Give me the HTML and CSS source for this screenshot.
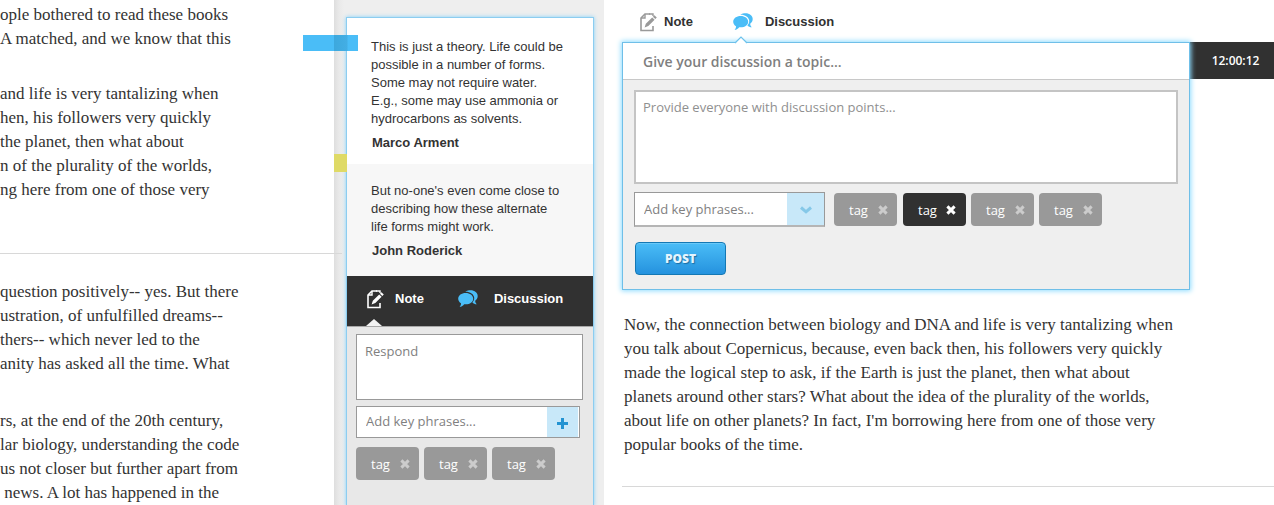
FILE: index.html
```
<!DOCTYPE html>
<html lang="en">
<head>
<meta charset="utf-8">
<title>Reader notes and discussion</title>
<link rel="stylesheet" href="styles.css">
</head>
<body>
<svg class="defs" aria-hidden="true">
  <symbol id="i-note" viewBox="0 0 17 19">
    <path d="M10 1H5L1 5V17.500H13V13" fill="none" stroke="currentColor" stroke-width="1.600"/>
    <path d="M5 1V5H1M9 1H13V3" fill="none" stroke="currentColor" stroke-width="1.400"/>
    <path d="M4.6 14.400L5.800 10.800L12.200 4.400L14.600 6.800L8.300 13.100Z M12.900 3.700L14.400 2.200L16.800 4.600L15.300 6.100Z" fill="currentColor"/>
  </symbol>
  <symbol id="i-chat" viewBox="0 0 20 18">
    <path d="M7.2 1.8C9 .6 10.800 .2 12.500 .2C16.700 .2 19.700 2.700 19.700 6C19.700 8 18.700 9.600 17.200 10.700C17.200 12.200 17.800 13.200 18.800 14.200C17 14.200 15.400 13.500 14.400 12.400C15.700 11.100 16.300 9.500 16.200 7.800C16 4.300 12 1.600 7.200 1.800Z" fill="currentColor"/>
    <path d="M7.700 3C11.900 3 15.200 5.400 15.200 8.700C15.200 12 11.900 14.300 7.700 14.300C7.200 14.300 6.700 14.300 6.200 14.200C5.200 15.800 3.600 16.700 1.600 16.800C2.600 15.800 3.100 14.600 3 13.200C1.300 12.200 .2 10.600 .2 8.700C.2 5.400 3.500 3 7.700 3Z" fill="currentColor"/>
  </symbol>
  <symbol id="i-x" viewBox="0 0 10 10">
    <path d="M1.400 1.400L8.600 8.600M8.600 1.400L1.400 8.600" stroke="currentColor" stroke-width="3" fill="none"/>
  </symbol>
</svg>
<div class="page">
  <main class="article article-left">
    <p>ople bothered to read these books<br>A matched, and we know that this</p>
    <p>and life is very tantalizing when<br>hen, his followers very quickly<br>the planet, then what about<br>n of the plurality of the worlds,<br>ng here from one of those very</p>
    <hr>
    <p>question positively-- yes. But there<br>ustration, of unfulfilled dreams--<br>thers-- which never led to the<br>anity has asked all the time. What</p>
    <p class="late">rs, at the end of the 20th century,<br>lar biology, understanding the code<br>us not closer but further apart from<br>&nbsp;news. A lot has happened in the</p>
  </main>

  <aside class="sidebar">
    <span class="marker marker-blue"></span>
    <span class="marker marker-yellow"></span>
    <div class="thread">
      <article class="comment">
        <p>This is just a theory. Life could be<br>possible in a number of forms.<br>Some may not require water.<br>E.g., some may use ammonia or<br>hydrocarbons as solvents.</p>
        <h3>Marco Arment</h3>
      </article>
      <article class="comment comment-reply">
        <p>But no-one's even come close to<br>describing how these alternate<br>life forms might work.</p>
        <h3>John Roderick</h3>
      </article>
      <nav class="tabs tabs-dark">
        <button type="button" class="tab"><svg class="i-note"><use href="#i-note"/></svg>Note</button>
        <button type="button" class="tab tab-chat"><svg class="i-chat"><use href="#i-chat"/></svg>Discussion</button>
      </nav>
      <form class="respond">
        <textarea class="field" aria-label="Respond" placeholder="Respond"></textarea>
        <div class="combo">
          <input type="text" aria-label="Key phrases" placeholder="Add key phrases...">
          <button type="button" class="add" aria-label="Add"><svg viewBox="0 0 11 11"><path d="M5.500 0V11M0 5.500H11" stroke="currentColor" stroke-width="3"/></svg></button>
        </div>
        <div class="tags">
          <button type="button" class="tag">tag<svg><use href="#i-x"/></svg></button>
          <button type="button" class="tag">tag<svg><use href="#i-x"/></svg></button>
          <button type="button" class="tag">tag<svg><use href="#i-x"/></svg></button>
        </div>
      </form>
    </div>
  </aside>

  <section class="reader">
    <nav class="tabs tabs-light">
      <button type="button" class="tab"><svg class="i-note"><use href="#i-note"/></svg>Note</button>
      <button type="button" class="tab tab-chat"><svg class="i-chat"><use href="#i-chat"/></svg>Discussion</button>
    </nav>
    <div class="compose-row">
      <form class="compose">
        <svg class="pointer" viewBox="0 0 14 8"><path d="M0 7.500H1L7 1L13 7.500H14V8H0Z" fill="#fff"/><path d="M1 7L7 1L13 7" fill="none" stroke="#6cc2ec" stroke-width="1.200"/></svg>
        <input class="topic" type="text" aria-label="Topic" placeholder="Give your discussion a topic...">
        <div class="compose-body">
          <textarea class="field points" aria-label="Discussion points" placeholder="Provide everyone with discussion points..."></textarea>
          <div class="phrases">
            <div class="picker">
              <select aria-label="Key phrases"><option>Add key phrases...</option></select>
              <svg viewBox="0 0 12 8"><path d="M1 1.500L6 5.800L11 1.500" fill="none" stroke="#85c8e8" stroke-width="3"/></svg>
            </div>
            <div class="tags">
              <button type="button" class="tag">tag<svg><use href="#i-x"/></svg></button>
              <button type="button" class="tag tag-active">tag<svg><use href="#i-x"/></svg></button>
              <button type="button" class="tag">tag<svg><use href="#i-x"/></svg></button>
              <button type="button" class="tag">tag<svg><use href="#i-x"/></svg></button>
            </div>
          </div>
          <button type="submit" class="post">POST</button>
        </div>
      </form>
      <time class="stamp">12:00:12</time>
    </div>
    <div class="article article-right">
      <p>Now, the connection between biology and DNA and life is very tantalizing when<br>you talk about Copernicus, because, even back then, his followers very quickly<br>made the logical step to ask, if the Earth is just the planet, then what about<br>planets around other stars? What about the idea of the plurality of the worlds,<br>about life on other planets? In fact, I'm borrowing here from one of those very<br>popular books of the time.</p>
      <hr>
    </div>
  </section>
</div>
</body>
</html>
```
FILE: styles.css
```
* { box-sizing: border-box; }

body, p, h3, hr { margin: 0; }

body {
  background: #fff;
  color: #333;
  overflow: hidden;
}

button, input, textarea, select {
  margin: 0;
  padding: 0;
  border: 0;
  border-radius: 0;
  background: none;
  font: 13px/18px "Open Sans", "Noto Sans", sans-serif;
  color: #7f7f7f;
  outline: none;
}

button { cursor: pointer; }
::placeholder { color: #7f7f7f; opacity: 1; }
form { margin: 0; }
.defs { display: none; }

.page {
  display: grid;
  grid-template-columns: minmax(0, 334fr) 270px minmax(0, 670fr);
  min-height: 100vh;
}

/* Article text */
.article {
  font: 17px/24px Georgia, "Liberation Serif", serif;
  white-space: nowrap;
}

.article hr {
  border: 0;
  height: 1px;
  background: #d8d8d8;
}

.article-left {
  position: relative;
  z-index: 1;
  padding-top: 3px;
}

.article-left p + p { margin-top: 31px; }
.article-left p + .late { margin-top: 33px; margin-bottom: -2px; }
.article-left hr { width: calc(100% + 8px); margin: 51px 0 26px; }

.article-right { padding-top: 23px; }
.article-right p { padding-left: 20px; }
.article-right hr { margin: 29px 0 0 18px; }

/* Sidebar */
.sidebar {
  position: relative;
  padding: 18px 11px 0 13px;
  background: linear-gradient(90deg, #dedede 0, #e9e9e9 5px, #eee 10px);
}

.marker { position: absolute; z-index: 2; }
.marker-blue {
  left: -31px;
  top: 35px;
  width: 55px;
  height: 16px;
  background: linear-gradient(90deg, #4abdf7 31px, #3da8dd 31px, #43aee4 44px, #4abdf7 45px);
}
.marker-yellow { left: 0; top: 154px; width: 13px; height: 18px; background: #dfda66; }

.thread {
  display: flex;
  flex-direction: column;
  height: 100%;
  background: #e8e8e8;
  box-shadow: 0 0 0 1px #8ccdf0, 0 0 4px 1px #7fd0fa;
}

.comment {
  padding: 20px 16px 12px 24px;
  background: #fff;
  font: 13px/18px "Liberation Sans", Arial, sans-serif;
}

.comment h3 { margin-top: 6px; padding-left: 1px; font-size: 13px; line-height: 18px; }
.comment-reply { padding: 18px 16px 16px 24px; background: #f7f7f7; }

/* Tabs */
.tabs { display: flex; align-items: center; }

.tab {
  display: flex;
  align-items: center;
  gap: 11px;
  font: bold 13px/18px "Liberation Sans", Arial, sans-serif;
}

.i-note { width: 17px; height: 19px; }
.i-chat { width: 20px; height: 18px; color: #4abdf7; }

.tabs-dark {
  position: relative;
  height: 50px;
  padding: 0 20px 4px;
  gap: 34px;
  background: #313131;
}

.tabs-dark::after {
  content: "";
  position: absolute;
  left: 19px;
  bottom: 0;
  border: solid transparent;
  border-width: 0 8px 7px;
  border-bottom-color: #f2f2f2;
}

.tabs-dark .tab { color: #fff; }
.tabs-dark .tab-chat { gap: 16px; }

.tabs-light { height: 42px; padding: 2px 0 0 36px; gap: 40px; }
.tabs-light .tab { gap: 7px; color: #313131; }
.tabs-light .i-note { color: #999; }
.tabs-light .tab-chat { gap: 12px; }

/* Fields */
.field {
  display: block;
  width: 100%;
  padding: 7px 8px;
  border: 1px solid #999;
  background: #fff;
  resize: none;
}

.respond {
  display: flex;
  flex-direction: column;
  gap: 6px;
  padding: 7px 10px 0 9px;
  border-top: 1px solid #a8a8a8;
}

.respond .field { height: 66px; }

.combo {
  display: flex;
  height: 32px;
  margin-right: 3px;
  padding-right: 1px;
  border: 1px solid #999;
  background: #fff;
}

.combo input { flex: 1; min-width: 0; padding: 0 0 2px 9px; }

.add {
  display: grid;
  place-items: center;
  width: 31px;
  padding-top: 3px;
  background: #c8e8f9;
  color: #2393d2;
}

.add svg { width: 11px; height: 11px; }

.tags { display: flex; gap: 5px; }
.respond .tags { margin-top: 3px; }

.tag {
  display: flex;
  align-items: center;
  justify-content: space-between;
  width: 63px;
  height: 33px;
  padding: 0 9px 0 15px;
  border-radius: 4px;
  background: #999;
  color: #fff;
}

.tag svg { width: 10px; height: 10px; color: #ccc; }
.tag-active { width: 64px; border-left: 1px solid #efefef; background: #313131; }
.tags .tag-active { width: 63px; margin-left: 1px; padding-right: 10px; border-left: 0; }
.tag-active svg { color: #fff; }

/* Discussion composer */
.compose-row { display: flex; align-items: flex-start; padding-left: 18px; }

.compose {
  position: relative;
  z-index: 1;
  flex: 1;
  min-width: 0;
  border: 1px solid #6fbfe8;
  background: #efefef;
  box-shadow: 0 0 5px 1px #8fdcff;
}

.pointer { position: absolute; left: 111px; top: -7px; width: 14px; height: 8px; }

.topic {
  display: block;
  width: 100%;
  height: 37px;
  padding: 0 20px;
  border-bottom: 1px solid #c8c8c8;
  background: #fff;
  font-size: 14px;
  font-weight: 600;
}

.compose-body { padding: 10px 11px 14px; }
.points { height: 94px; border: 2px solid #c4c4c4; padding: 6px 7px; }
.points::placeholder { color: #8f8f8f; }
.phrases { display: flex; align-items: center; gap: 9px; margin-top: 8px; }

.picker {
  position: relative;
  width: 191px;
  height: 35px;
  border: 1px solid #999;
  border-bottom: 2px solid #b5b5b5;
  background: linear-gradient(90deg, #fff 152px, #c8e8f9 152px);
}

.picker select {
  appearance: none;
  width: 100%;
  height: 100%;
  padding-left: 9px;
}

.picker svg { position: absolute; right: 12px; top: 13px; width: 12px; height: 8px; pointer-events: none; }

.post {
  display: block;
  width: 91px;
  height: 33px;
  margin: 15px 0 0 1px;
  border: 1px solid #1478b4;
  border-radius: 4px;
  background: linear-gradient(#4abdf7, #2592de);
  box-shadow: inset 0 1px 0 #69c9f8;
  color: #e4f5ff;
  font-size: 12px;
  font-weight: 800;
  text-shadow: 1px 1px 1px #1b6fa5;
}

.stamp {
  width: 84px;
  padding-left: 7px;
  background: #313131;
  color: #fff;
  font: 600 12px/37px "Open Sans", "Noto Sans", sans-serif;
  text-align: center;
}
```
